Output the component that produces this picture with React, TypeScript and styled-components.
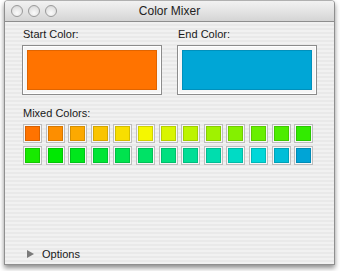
import styled, { createGlobalStyle } from "styled-components";

const GlobalStyle = createGlobalStyle`
  html, body {
    margin: 0;
    padding: 0;
    background: #ffffff;
  }
  body {
    font-family: "Liberation Sans", "DejaVu Sans", sans-serif;
  }
`

const START = { h: 27, s: 1, v: 1 }
const END = { h: 194, s: 1, v: 0.84 }
const STEPS = 26

const hsvToRgb = (h: number, s: number, v: number) => {
    const f = (n: number) => {
        const k = (n + h / 60) % 6
        return v - v * s * Math.max(0, Math.min(k, 4 - k, 1))
    }
    const to = (x: number) => Math.round(x * 255)
    return `rgb(${to(f(5))}, ${to(f(3))}, ${to(f(1))})`
}

const mixed = Array.from({ length: STEPS }, (_, i) => {
    const t = i / (STEPS - 1)
    return hsvToRgb(
        START.h + (END.h - START.h) * t,
        START.s + (END.s - START.s) * t,
        START.v + (END.v - START.v) * t
    )
})

const App = () => {
    return (
        <>
            <GlobalStyle />
            <Page>
                <Window>
                    <TitleBar>
                        <Lights>
                            <Light />
                            <Light />
                            <Light />
                        </Lights>
                        <Title>Color Mixer</Title>
                    </TitleBar>
                    <Body>
                        <WellRow>
                            <Field>
                                <Label>Start Color:</Label>
                                <Well>
                                    <Fill color="#ff7300" edge="#e06400" />
                                </Well>
                            </Field>
                            <Field>
                                <Label>End Color:</Label>
                                <Well>
                                    <Fill color="#00a6d6" edge="#0090bb" />
                                </Well>
                            </Field>
                        </WellRow>

                        <Label>Mixed Colors:</Label>
                        <Grid>
                            {mixed.map((c, i) => (
                                <Swatch key={i}>
                                    <Chip color={c} />
                                </Swatch>
                            ))}
                        </Grid>

                        <Spacer />

                        <Disclosure>
                            <Triangle />
                            <span>Options</span>
                        </Disclosure>
                    </Body>
                </Window>
            </Page>
        </>
    )
}

export default App;

const Page = styled.div`
    width: 340px;
    height: 271px;
    padding-left: 4px;
    box-sizing: border-box;
`
const Window = styled.div`
    width: 331px;
    height: 265px;
    box-sizing: border-box;
    border: 1px solid #8f8f8f;
    border-top-color: #b0b0b0;
    border-radius: 4px 4px 0 0;
    box-shadow: 0 3px 5px rgba(0, 0, 0, 0.45);
    display: flex;
    flex-direction: column;
    overflow: hidden;
`
const TitleBar = styled.div`
    position: relative;
    height: 20px;
    flex: none;
    background: linear-gradient(to bottom, #f2f2f2 0%, #e4e4e4 50%, #d4d4d4 100%);
    border-bottom: 1px solid #8e8e8e;
    display: flex;
    align-items: center;
    justify-content: center;
`
const Lights = styled.div`
    position: absolute;
    left: 6px;
    top: 4px;
    display: flex;
    gap: 5px;
`
const Light = styled.div`
    width: 10px;
    height: 10px;
    border-radius: 50%;
    border: 1px solid #9a9a9a;
    background: radial-gradient(circle at 50% 70%, #fbfbfb 0%, #e4e4e4 60%, #cdcdcd 100%);
`
const Title = styled.div`
    font-size: 12px;
    color: #222;
`
const Body = styled.div`
    flex: 1;
    display: flex;
    flex-direction: column;
    padding: 6px 17px 2px 17px;
    background: repeating-linear-gradient(to bottom, #f1f1f1 0px, #f1f1f1 2px, #e9e9e9 2px, #e9e9e9 4px);
    color: #1a1a1a;
`
const WellRow = styled.div`
    display: flex;
    gap: 15px;
    margin-bottom: 12px;
`
const Field = styled.div`
    display: flex;
    flex-direction: column;
`
const Label = styled.div`
    font-size: 11px;
    line-height: 13px;
    margin: 0 0 4px 1px;
`
const Well = styled.div`
    width: 140px;
    height: 50px;
    box-sizing: border-box;
    border: 1px solid #8c8c8c;
    box-shadow: inset 0 0 0 1px #ffffff;
    background: #f6f6f6;
    padding: 4px;
`
const Fill = styled.div<{ color: string; edge: string }>`
    width: 100%;
    height: 100%;
    box-sizing: border-box;
    background: ${p => p.color};
    border: 1px solid ${p => p.edge};
`
const Grid = styled.div`
    display: grid;
    grid-template-columns: repeat(13, 19px);
    column-gap: 3.6px;
    row-gap: 3px;
    margin-left: 1px;
`
const Swatch = styled.div`
    width: 19px;
    height: 19px;
    box-sizing: border-box;
    border: 1px solid #bdbdbd;
    background: #f7f7f7;
    padding: 1px;
`
const Chip = styled.div<{ color: string }>`
    width: 100%;
    height: 100%;
    box-sizing: border-box;
    background: ${p => p.color};
    border: 1px solid rgba(0, 0, 0, 0.15);
`
const Spacer = styled.div`
    flex: 1;
`
const Disclosure = styled.div`
    display: flex;
    align-items: center;
    gap: 8px;
    font-size: 11px;
    margin-left: 5px;
    height: 16px;
`
const Triangle = styled.div`
    width: 0;
    height: 0;
    border-top: 4.5px solid transparent;
    border-bottom: 4.5px solid transparent;
    border-left: 7px solid #7a7a7a;
`
